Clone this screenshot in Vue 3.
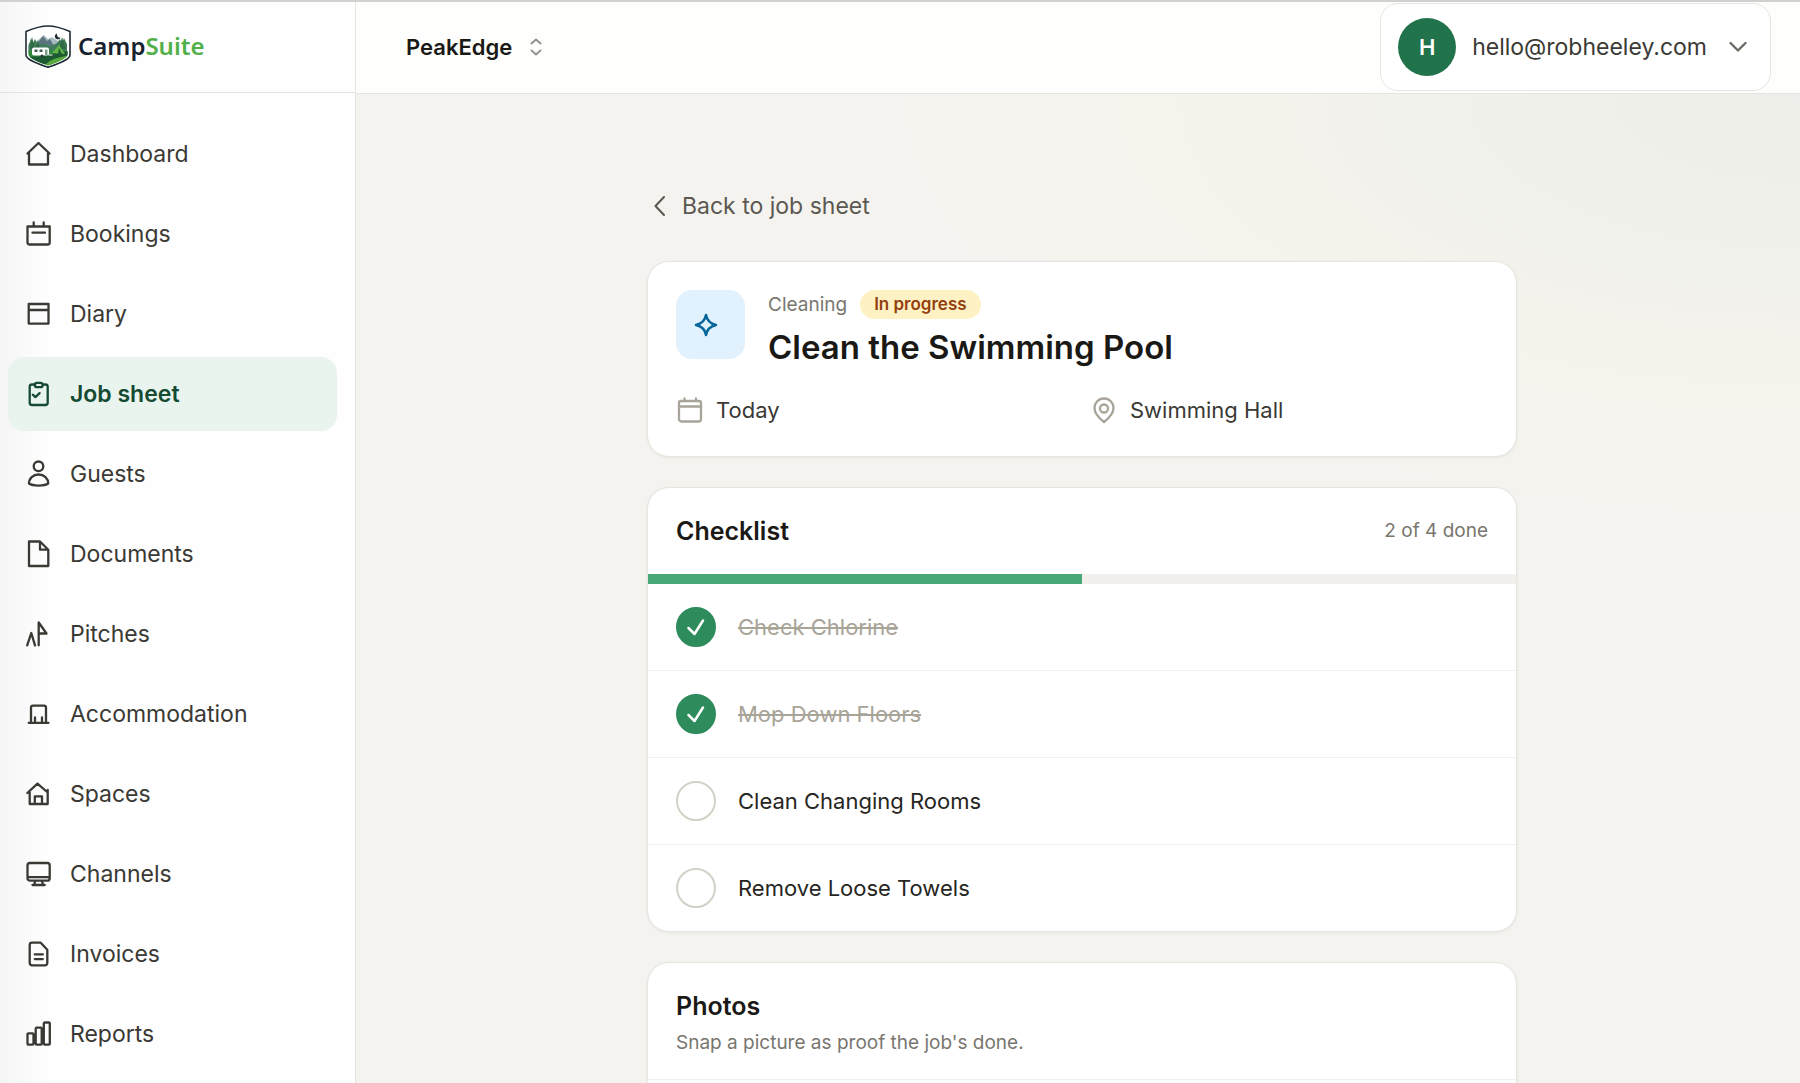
<script setup>
import { ref, computed } from 'vue'

const nav = [
  { label: 'Dashboard', icon: 'M1.5 12.5 12.5 2l11 10.5M3 11.5v12h19v-12' },
  { label: 'Bookings', icon: 'M1.5 5.5h22.2v16a2 2 0 0 1-2 2H3.5a2 2 0 0 1-2-2zM7.7 5.5v-4M17.7 5.5v-4M6.5 11.7h12.5' },
  { label: 'Diary', icon: 'M2.7 3h19.8v19.6H2.7zM2.7 9h19.8' },
  { label: 'Job sheet', icon: 'M9 3.5H6a2.3 2.3 0 0 0-2.3 2.3v15.9A2.3 2.3 0 0 0 6 24h13.4a2.3 2.3 0 0 0 2.3-2.3V5.8a2.3 2.3 0 0 0-2.3-2.3h-3M11 1.8h3.5a2.1 2.1 0 0 1 0 4.4H11a2.1 2.1 0 0 1 0-4.4zM6.8 13.7l2.6 2.4 4.2-4', active: true },
  { label: 'Guests', icon: 'M12.5.5a4.8 4.8 0 1 1 0 9.6 4.8 4.8 0 0 1 0-9.6zM3 22.5c0-5 4-9 9.6-9s9.6 4 9.6 9c-3.6 2.7-15.6 2.7-19.2 0z' },
  { label: 'Documents', icon: 'M3 .5h11l8.3 8.2V25H3zM14 1v7.7h8' },
  { label: 'Pitches', icon: 'M1.2 24.3 5.3 12 9 24.3M12.7 24.3V1.5l7.8 11h-7.5' },
  { label: 'Accommodation', icon: 'M2.7 21.8h19.8M5 21.5V6.7a2 2 0 0 1 2-2h11a2 2 0 0 1 2 2v14.8M9 21.5v-5M16 21.5v-5' },
  { label: 'Spaces', icon: 'M1.3 12 11.5 2.6 21.7 11.5M3.7 11v12h18V9M8.8 23v-7.6H16V23' },
  { label: 'Channels', icon: 'M4 2h17.2a2.5 2.5 0 0 1 2.5 2.5v12.7a2.5 2.5 0 0 1-2.5 2.5H4a2.5 2.5 0 0 1-2.5-2.5V4.5A2.5 2.5 0 0 1 4 2zM1.5 16.2h22.2M9.2 20l-1 4M16 20l1 4M6.5 24h12.2' },
  { label: 'Invoices', icon: 'M6 1.7h8.7l6.6 7v13.3a2.3 2.3 0 0 1-2.3 2.3H6A2.3 2.3 0 0 1 3.7 22V4A2.3 2.3 0 0 1 6 1.7zM8.8 13.4h8M8.8 18.1h8' },
  { label: 'Reports', icon: 'M2.5 12.3h4a1 1 0 0 1 1 1v9.4a1 1 0 0 1-1 1h-4a1 1 0 0 1-1-1v-9.4a1 1 0 0 1 1-1zM10.7 6.7h4a1 1 0 0 1 1 1v15a1 1 0 0 1-1 1h-4a1 1 0 0 1-1-1v-15a1 1 0 0 1 1-1zM18.8 1.5h4a1 1 0 0 1 1 1v20.2a1 1 0 0 1-1 1h-4a1 1 0 0 1-1-1V2.5a1 1 0 0 1 1-1z' },
]

const tasks = ref([
  { id: 1, name: 'Check Chlorine', done: true },
  { id: 2, name: 'Mop Down Floors', done: true },
  { id: 3, name: 'Clean Changing Rooms', done: false },
  { id: 4, name: 'Remove Loose Towels', done: false },
])

const doneCount = computed(() => tasks.value.filter((t) => t.done).length)
const progress = computed(() => (doneCount.value / tasks.value.length) * 100 + '%')
</script>

<template>
  <div class="app">
    <aside class="sidebar">
      <a href="#" class="brand">
        <svg class="badge" viewBox="0 0 46 43" aria-hidden="true">
          <defs>
            <clipPath id="shield"><path d="M23 3.5 42.5 9v20.5c0 4-12 8.5-19.5 11-7.5-2.5-19.5-7-19.5-11V9z" /></clipPath>
          </defs>
          <path d="M23 1c8 0 15 2.5 22 5.5V30c0 5-14 9.500-22 12.300C15 39.500 1 35 1 30V6.500C8 3.500 15 1 23 1z" fill="#fff" stroke="#1d2b33" stroke-width="1.6" />
          <g clip-path="url(#shield)">
            <path d="M3 22 13 15l6-5 4 4 4-2 15 10v8H3z" fill="#a9bcc0" />
            <path d="m11 20 7-9 4 5 3-2 4 7z" fill="#5b7480" />
            <path d="M3 20l2-3 1-4 2 5 2-4 3 6 5-1 8 2 6-3 3-4 2 4 2-5 3 6v8H3z" fill="#3f7d5a" />
            <path d="M5 24l2-12 3 12zM34 24l3-12 4 12zM10 24l3-9 2 9z" fill="#2f6a45" />
            <path d="M3 26h40v16H3z" fill="#2f8a3c" />
            <path d="M3 32c8-1 14 0 20-2s12-2 20-4v5c-9 1-14 6-20 8H3z" fill="#1c5a31" />
            <path d="M20 42c1-5 8-9 22-11v11z" fill="#57a83e" />
            <path d="m27 28 7-8 6 9z" fill="#63b548" />
            <path d="m33 29 1-6 3 6z" fill="#1f5c30" />
          </g>
          <rect x="7" y="22.5" width="17" height="8" rx="2" fill="#fff" />
          <path d="M9.5 24.5h3v2.5h-3zM14.5 24.5h3v2.5h-3z" fill="#3c5c50" />
          <path d="M20 24.5h2.5V30H20z" fill="#79a08c" />
          <path d="M24 30h3" stroke="#fff" stroke-width="1.2" />
          <circle cx="17" cy="31" r="1.5" fill="#26343b" />
          <path d="M32 8.5a3 3 0 1 0 3.5 4.2 3.3 3.3 0 0 1-3.5-4.2z" fill="#1d2b33" />
        </svg>
        <span class="brand-name">Camp<em>Suite</em></span>
      </a>
      <nav>
        <a v-for="item in nav" :key="item.label" href="#" :class="{ active: item.active }">
          <svg viewBox="0 0 26 26" aria-hidden="true"><path :d="item.icon" /></svg>
          <span>{{ item.label }}</span>
        </a>
      </nav>
    </aside>

    <div class="content">
      <header>
        <button type="button" class="site">
          PeakEdge
          <svg viewBox="0 0 12 18" aria-hidden="true"><path d="M1.5 5.5 6 1.5l4.5 4M1.5 12.5l4.5 4 4.5-4" /></svg>
        </button>
        <button type="button" class="account">
          <span class="avatar">H</span>
          <span class="email">hello@robheeley.com</span>
          <svg viewBox="0 0 18 12" aria-hidden="true"><path d="m1.5 2 7.5 7.5L16.5 2" /></svg>
        </button>
      </header>

      <main>
        <div class="column">
          <a href="#" class="back">
            <svg viewBox="0 0 12 20" aria-hidden="true"><path d="M10 1 1.5 10l8.5 9" /></svg>
            Back to job sheet
          </a>

          <section class="card job">
            <div class="job-head">
              <div class="tile">
                <svg viewBox="0 0 24 24" aria-hidden="true"><path d="M12 2c.9 5 3.8 8.6 10 10-6.2 1.4-9.1 5-10 10-.9-5-3.8-8.6-10-10 6.2-1.4 9.1-5 10-10z" /></svg>
              </div>
              <div>
                <div class="kind">
                  <span>Cleaning</span>
                  <span class="status">In progress</span>
                </div>
                <h1>Clean the Swimming Pool</h1>
              </div>
            </div>
            <div class="meta">
              <div>
                <svg viewBox="0 0 28 28" aria-hidden="true"><path d="M5 5h18a2 2 0 0 1 2 2v16a2.5 2.5 0 0 1-2.5 2.5h-17A2.5 2.5 0 0 1 3 23V7a2 2 0 0 1 2-2zM3 10.5h22M8.5 5V2.5M20 5V2.5" /></svg>
                Today
              </div>
              <div>
                <svg viewBox="0 0 28 28" aria-hidden="true"><path d="M14 2.5a9.5 9.5 0 0 1 9.5 9.5c0 6-5 10.5-9.5 14-4.5-3.5-9.5-8-9.5-14A9.5 9.5 0 0 1 14 2.5z" /><circle cx="14" cy="12.5" r="4" /></svg>
                Swimming Hall
              </div>
            </div>
          </section>

          <section class="card">
            <div class="card-head">
              <h2>Checklist</h2>
              <span class="count">{{ doneCount }} of {{ tasks.length }} done</span>
            </div>
            <div class="progress"><div :style="{ width: progress }"></div></div>
            <ul>
              <li v-for="task in tasks" :key="task.id">
                <label :class="{ done: task.done }">
                  <span class="tick">
                    <input v-model="task.done" type="checkbox" />
                    <svg v-if="task.done" viewBox="0 0 40 40" aria-hidden="true"><path d="m12.5 21 6 6L27 13.5" /></svg>
                  </span>
                  <span>{{ task.name }}</span>
                </label>
              </li>
            </ul>
          </section>

          <section class="card">
            <div class="photos-head">
              <h2>Photos</h2>
              <p>Snap a picture as proof the job's done.</p>
            </div>
            <div class="photos"></div>
          </section>
        </div>
      </main>
    </div>
  </div>
</template>

<style>
body { margin: 0; }
</style>

<style scoped>
.app {
  display: flex;
  box-sizing: border-box;
  height: 100vh;
  overflow: hidden;
  border-top: 2px solid #d2d1cf;
  background: #f5f3ef;
  color: #3a3934;
  font-family: Inter, "Liberation Sans", sans-serif;
  font-size: 22px;
  line-height: 32px;
}
svg { flex: none; fill: none; stroke: currentColor; stroke-width: 2; stroke-linecap: round; stroke-linejoin: round; }
a { color: inherit; text-decoration: none; }
button { font: inherit; color: inherit; cursor: pointer; }
h1, h2, p, ul { margin: 0; padding: 0; }

.sidebar {
  flex: none;
  box-sizing: border-box;
  width: 356px;
  border-right: 1px solid #e6e5e2;
  background: linear-gradient(90deg, #f5f5f5, #fefefe 48px);
}
.brand {
  display: flex;
  align-items: center;
  gap: 7px;
  box-sizing: border-box;
  height: 91px;
  padding: 0 25px 2px;
  border-bottom: 1px solid #e4e3e0;
}
.badge { width: 46px; height: 43px; stroke: none; }
.brand-name { color: #18222f; font-family: "Noto Sans", "Open Sans", sans-serif; font-size: 24px; font-weight: 600; }
.brand-name em { color: #52b04a; font-style: normal; }

nav { display: flex; flex-direction: column; gap: 6px; padding: 24px 18px 24px 8px; font-size: 23px; }
nav a { display: flex; align-items: center; gap: 18px; height: 74px; padding-left: 18px; border-radius: 16px; }
nav svg { width: 26px; height: 26px; overflow: visible; stroke-width: 2.3; }
nav .active { background: #eaf4ef; color: #154a33; font-weight: 600; }

.content { display: flex; flex: 1; flex-direction: column; min-width: 0; }
header {
  display: flex;
  flex: none;
  align-items: center;
  justify-content: space-between;
  box-sizing: border-box;
  height: 92px;
  padding: 0 29px 2px 50px;
  border-bottom: 1px solid #e6e4de;
  background: #fefefc;
}
.site { display: flex; align-items: center; gap: 18px; padding: 0; border: 0; background: none; color: #1a1916; font-weight: 600; }
.site svg { width: 12px; height: 18px; color: #96948d; }
.account {
  display: flex;
  align-items: center;
  box-sizing: border-box;
  height: 88px;
  padding: 0 23px 0 17px;
  border: 1px solid #e6e5e1;
  border-radius: 18px;
  background: #fff;
}
.account svg { width: 18px; height: 12px; margin-left: 22px; color: #6b6962; stroke-width: 2.3; }
.avatar { width: 58px; margin-right: 16px; border-radius: 50%; background: #20734a; color: #fff; font-weight: 600; line-height: 58px; text-align: center; }
.email { font-size: 23px; }

main {
  flex: 1;
  overflow-y: auto;
  scrollbar-width: none;
  padding: 96px 39px 30px 47px;
  background: radial-gradient(ellipse 900px 420px at 100% 0, #eeeeea, #f4f3ec 70%, #f5f3ef);
}
.column { display: flex; flex-direction: column; gap: 30px; max-width: 870px; margin: 0 auto; }
.back { display: flex; align-items: center; align-self: flex-start; gap: 16px; margin-bottom: 9px; padding-left: 7px; color: #5a5851; font-size: 23px; }
.back svg { width: 12px; height: 20px; }

.card { overflow: hidden; border: 1px solid #e7e5e0; border-radius: 22px; background: #fff; box-shadow: 0 1px 3px rgba(40, 35, 20, 0.06); }
.job { padding: 28px 28px 30px; }
.job-head { display: flex; gap: 23px; }
.tile { display: flex; align-items: center; box-sizing: border-box; width: 69px; height: 69px; padding-left: 18px; border-radius: 16px; background: #e1f1fe; color: #076699; }
.tile svg { width: 24px; height: 24px; stroke-width: 2.5; }
.kind { display: flex; align-items: center; gap: 13px; color: #78766e; font-size: 19px; line-height: 29px; }
.status { padding: 0 14px; border-radius: 15px; background: #fef2c5; color: #93400f; font-size: 17px; font-weight: 600; }
h1 { color: #1a1916; font-size: 33px; font-weight: 600; line-height: 56px; }
.meta { display: grid; grid-template-columns: 1fr 1fr; gap: 16px; margin-top: 19px; }
.meta div { display: flex; align-items: center; gap: 12px; }
.meta svg { width: 28px; height: 28px; color: #a8a499; stroke-width: 2.3; }

.card-head { display: flex; align-items: center; justify-content: space-between; height: 86px; padding: 0 28px; }
h2 { color: #1a1916; font-size: 25px; font-weight: 600; line-height: 32px; }
.count { color: #78766e; font-size: 19px; }
.progress { height: 10px; background: #f1f0ec; }
.progress div { height: 100%; background: #48a776; }

ul { list-style: none; }
li + li { border-top: 1px solid #f0efec; }
label { display: flex; align-items: center; gap: 22px; height: 86px; padding: 0 28px; color: #262521; cursor: pointer; }
.tick { position: relative; width: 40px; height: 40px; }
.tick input { appearance: none; box-sizing: border-box; width: 40px; height: 40px; margin: 0; border: 2px solid #d3d1c6; border-radius: 50%; background: #fff; }
.tick input:checked { border-color: #2e8b5c; background: #2e8b5c; }
.tick svg { position: absolute; inset: 0; color: #fff; stroke-width: 2.5; pointer-events: none; }
.done { color: #a8a498; text-decoration: line-through; }

.photos-head { padding: 27px 28px 20px; border-bottom: 1px solid #f0efec; }
.photos-head p { padding-top: 5px; color: #78766e; font-size: 19px; }
.photos { min-height: 160px; }
</style>
